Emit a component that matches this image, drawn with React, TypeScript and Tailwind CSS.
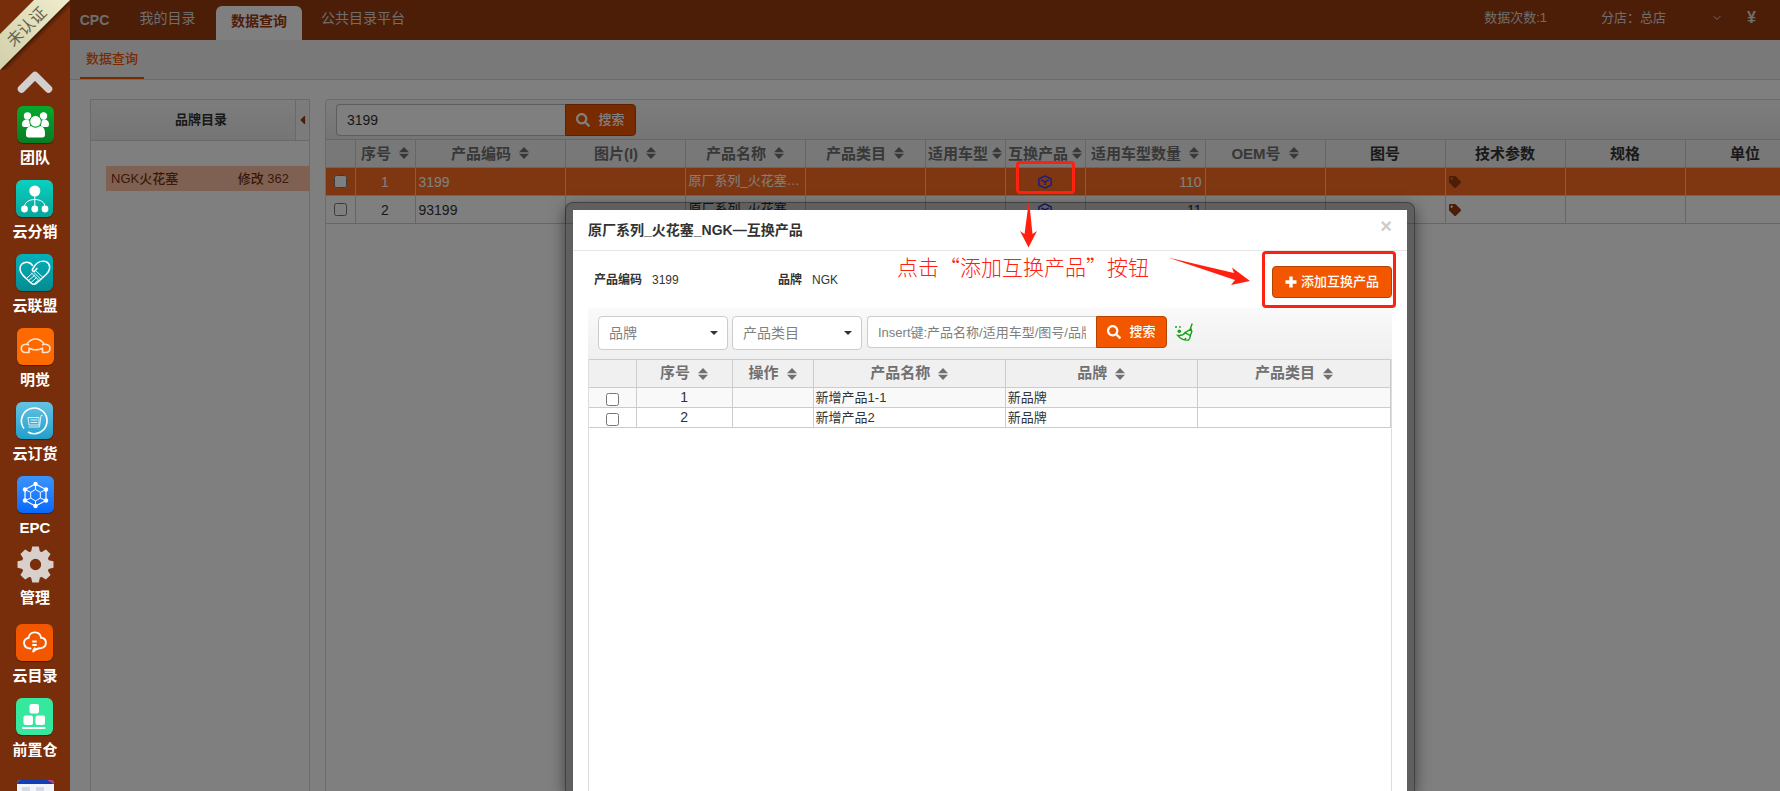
import React from 'react';
import { FaSearch, FaTag, FaCaretLeft } from 'react-icons/fa';
import { FiChevronDown } from 'react-icons/fi';

function SortIcon() {
  return (
    <svg viewBox="0 0 10 12" className="h-3 w-[10px] shrink-0" fill="currentColor" aria-hidden="true">
      <path d="M5 0 10 5.3H0zM5 12 0 6.700h10z" />
    </svg>
  );
}

function CubeIcon() {
  return (
    <svg viewBox="0 0 16 16" className="size-[14px]" fill="none" stroke="#2b3cff" strokeWidth="1.6" strokeLinejoin="round" aria-hidden="true">
      <path d="M8 1 15 4.500v7L8 15 1 11.500v-7zM3.500 5.600 8 7.800l4.500-2.200M8 8v3.500" />
    </svg>
  );
}

function PlusIcon() {
  return (
    <svg viewBox="0 0 12 12" className="size-3" fill="currentColor" aria-hidden="true">
      <path d="M4.300 0.500h3.400v3.800h3.800v3.400H7.700v3.800H4.300V7.700H.5V4.300h3.800z" />
    </svg>
  );
}

function GearIcon() {
  return (
    <svg viewBox="0 0 36 36" className="size-[37px]" fill="#d9d0cc" aria-hidden="true">
      <circle cx="18" cy="18" r="9.500" fill="none" stroke="#d9d0cc" strokeWidth="8" />
      {[0, 45, 90, 135, 180, 225, 270, 315].map((a) => (
        <path key={a} d="M14.800 0.500h6.400l1.300 6h-9z" transform={`rotate(${a} 18 18)`} />
      ))}
    </svg>
  );
}

function BroomIcon() {
  return (
    <svg viewBox="0 0 18 18" className="size-[18px]" fill="none" stroke="#15a315" strokeWidth="1.4" aria-hidden="true">
      <path d="M17.2.5 15 6.800M10 9.600l6-3.600 1 3.200M2.600 12.400c3.600.6 6-.6 7.400-2.800l5.400 3c-.2 2-.9 3.400-1.800 4.400-4.200.6-8-.9-11-4.600zM9.500 16.800l1.500-2M15.400 12.600l1.200-3.600" />
      <g fill="#15a315" stroke="none">
        <circle cx="4.300" cy="8.300" r="1.800" />
        <circle cx="1" cy="3.900" r="1" />
        <circle cx="5" cy="3.900" r="0.900" />
      </g>
    </svg>
  );
}

const art: Record<string, React.ReactNode> = {
  team: (
    <g fill="#fff">
      <circle cx="10.500" cy="10" r="3.700" />
      <circle cx="26.500" cy="10" r="3.700" />
      <path d="M5 18c0-3 2-4.500 5-4.500l3 1.500v5l-2 1H7c-1.500 0-2-1-2-3zM32 18c0-3-2-4.500-5-4.500l-3 1.500v5l2 1h4c1.500 0 2-1 2-3z" />
      <circle cx="18.500" cy="15.300" r="5.800" stroke="#059a2a" strokeWidth="1" />
      <path d="M9 27c0-4.500 2-6.500 5-7 3 2.300 6 2.300 9 0 3 .5 5 2.500 5 7v2c0 1.500-1 2.500-2.500 2.500h-14C10 31.500 9 30.500 9 29z" />
    </g>
  ),
  share: (
    <g fill="#fff">
      <circle cx="18.800" cy="11" r="5.500" />
      <circle cx="8.500" cy="29" r="3.400" />
      <circle cx="18.800" cy="29" r="3.400" />
      <circle cx="29" cy="29" r="3.400" />
      <path d="M18.800 15v11M8.500 27c0-5 5-7.500 10.300-7.500S29 22 29 27" fill="none" stroke="#fff" strokeWidth="1" />
    </g>
  ),
  heart: (
    <g fill="none" stroke="#fff" strokeWidth="1.500" strokeLinecap="round" strokeLinejoin="round">
      <path d="M16.500 11.500C13 6.500 4.500 7.500 4 14.500c-.2 4.500 3 7 6 9.800l5 4.700c1.800 1.600 4 1.600 5.800 0l9-8.200c6-5.500 4-11.500.5-13-4-1.600-8.500.2-11 3.200l-3 4.500c-.3 1.800 1.700 2.300 2.700 1.200l2-2.200" />
      <path d="m11 24 5-4.500M13 26.300l5.500-5M15.300 28.300l5-4.500M18.500 29.500l3.500-3M15.500 19l8 8M18 18.500l7 7M20.500 17.500l6.500 6" strokeWidth="1" />
    </g>
  ),
  car: (
    <g fill="none" stroke="#ffe3cc" strokeWidth="1.600" strokeLinejoin="round">
      <path d="M10 16c2-3 5-5 8.500-5s6.500 2 8.500 5" />
      <path d="M12 17c-4.500-2-8 .5-7.700 3.500.2 2.800 2 4 4.200 4H12v-4.300c4.500 2.300 9 2.300 13.500 0v4.300h3.300c2.200 0 4-1.200 4.200-4 .2-3-3.500-5.500-8-3.500" />
    </g>
  ),
  cart: (
    <g fill="none" stroke="#fff" strokeWidth="1.600">
      <path d="M8 26.500A12.800 12.800 0 1 1 12 30" />
      <path d="M12 15.500h11v7.500H13zM14.500 18h7M14.500 20.500h7M12.500 25h11l1.500-11.500h1.500" strokeWidth="1" opacity=".8" />
    </g>
  ),
  hex: (
    <g fill="none" stroke="#fff" strokeWidth="1.200">
      <path d="M18.500 8 29 13.500v11L18.500 30 8 24.500v-11z" />
      <path d="m18.500 13.500 4.800 2.800v5.800l-4.800 2.800-4.800-2.800v-5.800zM18.500 8v5.500M29 13.500l-5.700 2.800M29 24.500l-5.700-2.400M18.500 30v-5M8 24.500l5.700-2.400M8 13.500l5.700 2.800" strokeWidth="1" />
      <g fill="#fff" stroke="none">
        <circle cx="18.500" cy="8" r="2.200" /><circle cx="29" cy="13.500" r="2.200" /><circle cx="29" cy="24.500" r="2.200" />
        <circle cx="18.500" cy="30" r="2.200" /><circle cx="8" cy="24.500" r="2.200" /><circle cx="8" cy="13.500" r="2.200" />
      </g>
    </g>
  ),
  cloud: (
    <g fill="none" stroke="#fff" strokeWidth="1.900" strokeLinecap="round">
      <path d="M14.500 24.500c-8 0-8.500-10-2-10.500 1-7.500 11.500-7.500 12.500-.3 6.500.5 6.500 9.300 0 10.300-4 .4-6.500 1.800-8 4 .2-1.700.8-2.800 1.800-3.700" />
      <path d="M16.300 17.500h4.400M16.300 21h4.400" strokeWidth="1.800" strokeLinecap="butt" />
    </g>
  ),
  boxes: (
    <g fill="#fff">
      <rect x="13.500" y="6" width="9.500" height="9.500" rx="2" />
      <rect x="7.500" y="17.500" width="9.500" height="9.500" rx="2" />
      <rect x="19.500" y="17.500" width="9.500" height="9.500" rx="2" />
      <rect x="6" y="29" width="23.500" height="2" rx="1" />
    </g>
  ),
  sheet: (
    <g>
      <rect width="37" height="37" rx="4" fill="#f2f4fb" />
      <path d="M0 4a4 4 0 0 1 4-4h29a4 4 0 0 1 4 4z" fill="#123fb8" />
      <path d="M30 0h3a4 4 0 0 1 4 4z" fill="#d23c78" />
      <path d="M5 7h8v4H5zM19 7h8v4h-8z" fill="#d5d9e6" />
    </g>
  ),
};

const apps: { name: string; icon: string; tile: string; gap: string }[] = [
  { name: '团队', icon: 'team', tile: 'bg-linear-to-b from-[#06a92c] to-[#067c25]', gap: 'mt-0' },
  { name: '云分销', icon: 'share', tile: 'bg-linear-to-b from-[#0bd0c0] to-[#05a69b]', gap: 'mt-3' },
  { name: '云联盟', icon: 'heart', tile: 'bg-linear-to-b from-[#02b1bd] to-[#038b91]', gap: 'mt-3' },
  { name: '明觉', icon: 'car', tile: 'bg-[#ff6a00]', gap: 'mt-3' },
  { name: '云订货', icon: 'cart', tile: 'bg-linear-to-b from-[#62c3e4] to-[#1f9fcb]', gap: 'mt-3' },
  { name: 'EPC', icon: 'hex', tile: 'bg-linear-to-b from-[#3b93fb] to-[#0668fb]', gap: 'mt-3' },
  { name: '管理', icon: 'gear', tile: '', gap: 'mt-2' },
  { name: '云目录', icon: 'cloud', tile: 'bg-[#f25700]', gap: 'mt-4' },
  { name: '前置仓', icon: 'boxes', tile: 'bg-[#36e89e]', gap: 'mt-3' },
  { name: '', icon: 'sheet', tile: '', gap: 'mt-5' },
];

function Sidebar() {
  return (
    <aside className="relative flex w-[70px] shrink-0 flex-col items-center overflow-hidden bg-[#782e0b] pt-[70px]">
      <div className="absolute top-0 left-0 size-[70px]">
        <svg viewBox="0 0 70 70" className="absolute inset-0 size-full" aria-hidden="true">
          <defs>
            <linearGradient id="ribbon" x1="1" y1="0" x2="0" y2="1">
              <stop offset="0" stopColor="#eeeccb" />
              <stop offset="1" stopColor="#d2cfaa" />
            </linearGradient>
          </defs>
          <path d="M36 0h34L0 70V34z" fill="#000" opacity=".15" transform="translate(3 4)" />
          <path d="M36 0h34L0 70V34z" fill="#000" opacity=".3" transform="translate(1 2)" />
          <path d="M34 0h36L0 70V34z" fill="url(#ribbon)" />
        </svg>
        <span className="absolute top-[17px] left-[-8px] w-[70px] -rotate-45 text-center text-base leading-5 text-[#66624f]">未认证</span>
      </div>
      <button type="button" aria-label="向上" className="mb-3 flex h-6 w-9 shrink-0">
        <svg viewBox="0 0 36 24" className="h-6 w-9" fill="none" stroke="#d3cfcd" strokeWidth="7.500" strokeLinecap="round" strokeLinejoin="round" aria-hidden="true">
          <path d="M4.500 19 18 5.500 31.500 19" />
        </svg>
      </button>
      {apps.map((a) => (
        <a key={a.icon} href="#" aria-label={a.name || '更多'} className={`flex shrink-0 flex-col items-center ${a.gap}`}>
          {a.icon === 'gear' ? (
            <GearIcon />
          ) : (
            <span className={`flex size-[37px] rounded-md shadow-[0_1px_1px_rgba(0,0,0,0.4)] ${a.tile}`}>
              <svg viewBox="0 0 37 37" className="size-[37px]" aria-hidden="true">{art[a.icon]}</svg>
            </span>
          )}
          {a.name && <span className="mt-1 text-[15px] leading-[21px] font-bold text-white">{a.name}</span>}
        </a>
      ))}
    </aside>
  );
}

const cols: { label: string; width: string; sort: boolean }[] = [
  { label: '序号', width: 'w-[60px]', sort: true },
  { label: '产品编码', width: 'w-[150px]', sort: true },
  { label: '图片(I)', width: 'w-[120px]', sort: true },
  { label: '产品名称', width: 'w-[120px]', sort: true },
  { label: '产品类目', width: 'w-[120px]', sort: true },
  { label: '适用车型', width: 'w-[80px]', sort: true },
  { label: '互换产品', width: 'w-[80px]', sort: true },
  { label: '适用车型数量', width: 'w-[120px]', sort: true },
  { label: 'OEM号', width: 'w-[120px]', sort: true },
  { label: '图号', width: 'w-[120px]', sort: false },
  { label: '技术参数', width: 'w-[120px]', sort: false },
  { label: '规格', width: 'w-[120px]', sort: false },
  { label: '单位', width: 'w-[120px]', sort: false },
];

const rows = [
  { no: 1, code: '3199', name: '原厂系列_火花塞_NGK', count: 110 },
  { no: 2, code: '93199', name: '原厂系列_火花塞_NGK', count: 11 },
];

function Catalogue() {
  return (
    <section className="flex min-w-0 flex-1 flex-col overflow-hidden rounded-tl border-t border-l border-[#d4d4d4]">
      <form className="flex h-[39px] shrink-0 items-center bg-linear-to-b from-[#fafafa] to-[#ebebeb] px-[10px]">
        <input aria-label="关键词" defaultValue="3199" className="h-8 w-[229px] rounded-l border border-r-0 border-[#bbb] bg-white px-[10px] text-sm text-[#333]" />
        <button type="button" className="flex h-8 w-[71px] items-center justify-center gap-2 rounded-r border border-[#b84300] bg-[#f25700] text-[13px] font-medium text-white">
          <FaSearch className="size-[14px]" />搜索
        </button>
      </form>
      <table className="w-[1479px] shrink-0 table-fixed border-collapse text-sm text-[#333]">
        <thead>
          <tr className="h-7 bg-[#f0f0f0]">
            <th aria-label="选择" className="w-[29px] border border-l-0 border-[#ccc]" />
            {cols.map((c) => (
              <th key={c.label} className={`border border-[#ccc] p-0 ${c.width}`}>
                <span className={`flex items-center justify-center text-[15px] font-bold whitespace-nowrap ${c.width === 'w-[80px]' ? 'gap-1' : 'gap-2'} ${c.sort ? 'text-[#707070]' : 'text-[#333]'}`}>
                  {c.label}{c.sort && <SortIcon />}
                </span>
              </th>
            ))}
          </tr>
        </thead>
        <tbody>
          {rows.map((r) => (
            <tr key={r.no} className={`h-7 ${r.no === 1 ? 'bg-[#ff6f24] text-white' : 'bg-white'}`}>
              <td className="border border-l-0 border-[#ccc] p-0"><input type="checkbox" aria-label={`选择 ${r.code}`} className="mx-auto block size-[13px]" /></td>
              <td className="border border-[#ccc] p-0 text-center">{r.no}</td>
              <td className="border border-[#ccc] px-[3px] py-0">{r.code}</td>
              <td className="border border-[#ccc]" />
              <td className="truncate border border-[#ccc] px-[3px] py-0 text-[13px]">{r.name}</td>
              <td className="border border-[#ccc]" />
              <td className="border border-[#ccc]" />
              <td className="border border-[#ccc] p-0"><a href="#" aria-label="互换产品" className="flex justify-center"><CubeIcon /></a></td>
              <td className="border border-[#ccc] px-[3px] py-0 text-right">{r.count}</td>
              <td className="border border-[#ccc]" />
              <td className="border border-[#ccc]" />
              <td className="border border-[#ccc] px-[3px] py-0"><FaTag className="size-3 text-[#983c10]" /></td>
              <td className="border border-[#ccc]" />
              <td className="border border-[#ccc]" />
            </tr>
          ))}
        </tbody>
      </table>
    </section>
  );
}

const dialogCols = [
  { label: '序号', width: 'w-[96px]' },
  { label: '操作', width: 'w-[81px]' },
  { label: '产品名称', width: 'w-[192px]' },
  { label: '品牌', width: 'w-[192px]' },
  { label: '产品类目', width: 'w-[193px]' },
];

function Select({ label }: { label: string }) {
  return (
    <span className="relative flex">
      <select aria-label={label} className="h-[34px] w-[130px] appearance-none rounded border border-[#ccc] bg-white px-[10px] text-sm text-[#808080]">
        <option>{label}</option>
      </select>
      <svg viewBox="0 0 8 4" className="pointer-events-none absolute top-[15px] right-[10px] h-1 w-2" fill="#333" aria-hidden="true"><path d="M0 0h8L4 4z" /></svg>
    </span>
  );
}

function Dialog() {
  return (
    <div role="dialog" aria-label="互换产品" className="absolute top-[202px] bottom-0 left-[495px] flex w-[850px] rounded-t-lg border border-b-0 border-black/30 bg-black/25 px-[7px] pt-[7px] shadow-[0_5px_15px_rgba(0,0,0,0.5)]">
      <div className="flex min-w-0 flex-1 flex-col bg-white">
        <header className="flex h-[41px] shrink-0 items-center justify-between border-b border-[#e5e5e5] px-[15px]">
          <h2 className="text-sm font-bold text-[#333]">原厂系列_火花塞_NGK—互换产品</h2>
          <button type="button" aria-label="关闭" className="-mt-2 text-xl leading-5 font-bold text-[#ccc]">×</button>
        </header>
        <div className="flex h-[57px] shrink-0 items-center px-[15px] text-xs text-[#333]">
          <dl className="flex flex-1">
            <div className="flex w-[184px] gap-[10px] pl-[6px]"><dt className="font-bold">产品编码</dt><dd>3199</dd></div>
            <div className="flex gap-[10px] pl-[6px]"><dt className="font-bold">品牌</dt><dd>NGK</dd></div>
          </dl>
          <div className="relative mt-1">
            <button type="button" className="flex h-8 w-[120px] items-center justify-center gap-1 rounded border border-[#b84300] bg-[#f25700] text-[13px] font-medium text-white"><PlusIcon />添加互换产品</button>
            <span className="pointer-events-none absolute -top-[15px] -right-1 -bottom-[10px] -left-[10px] rounded border-[3px] border-[#ff2010]" />
          </div>
        </div>
        <div className="mx-[15px] flex min-h-0 flex-1 flex-col">
          <form className="flex h-[51px] shrink-0 gap-1 bg-linear-to-b from-[#fafafa] to-[#efefef] px-[10px] pt-2">
            <Select label="品牌" />
            <Select label="产品类目" />
            <div className="ml-px flex h-8">
              <input aria-label="关键词" placeholder="Insert键:产品名称/适用车型/图号/品牌" className="h-8 w-[229px] rounded-l border border-r-0 border-[#ccc] bg-white px-[10px] text-[13px] placeholder:text-[#808080]" />
              <button type="button" className="flex h-8 w-[71px] items-center justify-center gap-2 rounded-r border border-[#b84300] bg-[#f25700] text-[13px] font-medium text-white"><FaSearch className="size-[14px]" />搜索</button>
            </div>
            <button type="button" aria-label="清除" className="ml-1 flex h-8 items-center"><BroomIcon /></button>
          </form>
          <div className="flex-1 border-x border-[#ddd]">
            <table className="w-full table-fixed border-collapse text-[13px] text-[#333]">
              <thead>
                <tr className="h-7 bg-[#f0f0f0]">
                  <th aria-label="选择" className="w-[47px] border border-l-0 border-[#ccc]" />
                  {dialogCols.map((c) => (
                    <th key={c.label} className={`border border-[#ccc] p-0 ${c.width}`}>
                      <span className="flex items-center justify-center gap-2 text-[15px] font-bold text-[#707070]">{c.label}<SortIcon /></span>
                    </th>
                  ))}
                </tr>
              </thead>
              <tbody>
                {['新增产品1-1', '新增产品2'].map((n, i) => (
                  <tr key={n} className={`h-5 ${i === 0 ? 'bg-[#f9f9f9]' : 'bg-white'}`}>
                    <td className="border border-l-0 border-[#ccc] p-0 pt-1"><input type="checkbox" aria-label={`选择 ${n}`} className="mx-auto block size-[13px]" /></td>
                    <td className="border border-[#ccc] p-0 text-center text-sm leading-[19px]">{i + 1}</td>
                    <td className="border border-[#ccc]" />
                    <td className="border border-[#ccc] px-[2px] py-0 leading-[19px]">{n}</td>
                    <td className="border border-[#ccc] px-[2px] py-0 leading-[19px]">新品牌</td>
                    <td className="border border-[#ccc]" />
                  </tr>
                ))}
              </tbody>
            </table>
          </div>
        </div>
      </div>
    </div>
  );
}

function Annotations() {
  return (
    <div className="pointer-events-none absolute inset-0 overflow-hidden">
      <span className="absolute top-[161px] left-[1016px] h-[33px] w-[59px] rounded border-[3px] border-[#ff2010]" />
      <svg viewBox="0 0 500 100" className="absolute top-[200px] left-[800px] h-[100px] w-[500px]" fill="#ff2010" aria-hidden="true">
        <path d="M229 0 232.500 34 237 31 228.500 47.500 220 31 224.500 34z" />
        <path d="M368 57.500 434 73 432 67.500 450 81 431 85 435 80z" />
      </svg>
      <p lang="zh-CN" className="absolute top-[251px] left-[897px] font-['Noto_Sans_CJK_SC',sans-serif] text-[21px] leading-[30px] font-light whitespace-nowrap text-[#ff2010]">点击“添加互换产品”按钮</p>
    </div>
  );
}

export default function App() {
  return (
    <div className="relative flex h-screen overflow-hidden bg-white font-['Liberation_Sans','Noto_Sans_CJK_SC',sans-serif]">
      <Sidebar />
      <div className="relative flex min-w-0 flex-1 flex-col overflow-hidden">
        <header className="flex h-10 shrink-0 items-end bg-[#983c10] text-sm text-[#ddd]">
          <nav className="flex flex-1 items-end">
            <a href="#" className="flex h-10 w-[49px] items-center justify-center font-bold">CPC</a>
            <a href="#" className="flex h-10 w-[97px] items-center justify-center pb-1">我的目录</a>
            <a href="#" className="flex h-[34px] w-[86px] items-center justify-center rounded-t-md bg-white pb-1 font-bold text-[#983c10]">数据查询</a>
            <a href="#" className="flex h-10 w-[122px] items-center justify-center pb-1">公共目录平台</a>
          </nav>
          <div className="flex h-10 items-center pr-6 pb-1 text-[13px]">
            <span>数据次数:1</span>
            <button type="button" className="ml-[54px] flex w-[122px] items-center justify-between">分店：总店<FiChevronDown className="size-3" /></button>
            <span className="ml-6 text-base font-bold">¥</span>
          </div>
        </header>
        <div className="flex h-10 shrink-0 border-b border-[#d4d4d4] bg-[#f3f3f3] px-[10px]">
          <a href="#" className="flex h-[39px] w-16 items-center justify-center border-b-2 border-[#f25700] text-[13px] font-medium text-[#f25700]">数据查询</a>
        </div>
        <main className="flex min-h-0 flex-1 gap-[15px] pt-[19px] pl-5">
          <aside className="flex w-[220px] shrink-0 flex-col border border-b-0 border-[#d4d4d4]">
            <div className="flex h-[41px] shrink-0 border-b border-[#d4d4d4] bg-linear-to-b from-[#fafafa] to-[#ebebeb]">
              <h2 className="flex flex-1 items-center justify-center pl-4 text-[13px] font-bold text-[#333]">品牌目录</h2>
              <button type="button" aria-label="收起" className="flex w-[14px] items-center justify-center border-l border-[#d4d4d4] bg-[#f6f6f6] text-[#983c10]"><FaCaretLeft className="size-[14px]" /></button>
            </div>
            <a href="#" className="mt-[25px] ml-[15px] flex h-[25px] items-center justify-between bg-[#ffc3a6] pr-5 pl-[5px] text-[13px] font-medium text-[#7a300d]"><span>NGK火花塞</span><span>修改 362</span></a>
          </aside>
          <Catalogue />
        </main>
        <div className="absolute inset-0 bg-black/50" />
        <Dialog />
      </div>
      <Annotations />
    </div>
  );
}
